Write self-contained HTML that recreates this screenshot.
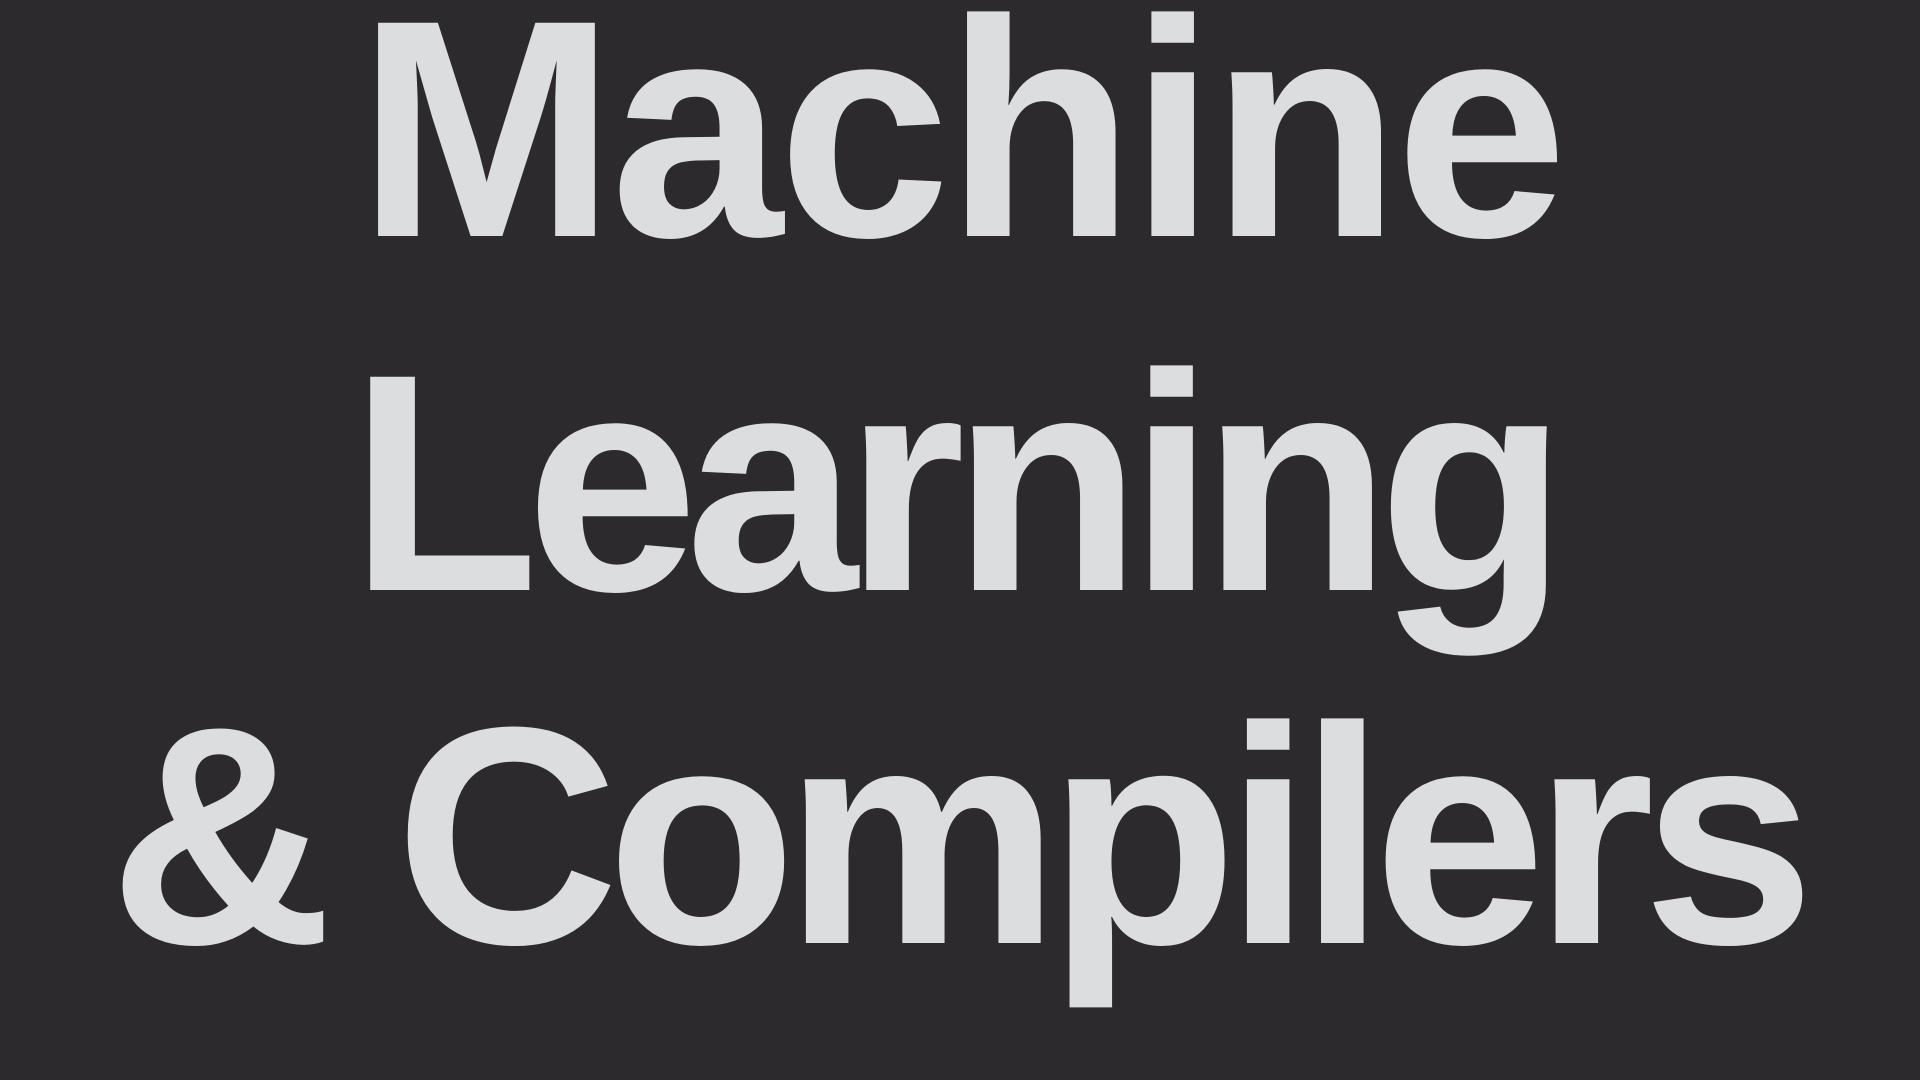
<!DOCTYPE html>
<html><head><meta charset="utf-8"><style>
html,body{margin:0;padding:0;width:1920px;height:1080px;overflow:hidden;background:#2c2a2d;}
.l{position:absolute;left:0;width:1920px;text-align:center;font-family:"Liberation Sans",sans-serif;font-weight:bold;font-size:310px;line-height:310px;color:#dcdddf;white-space:nowrap;letter-spacing:-5px;}
</style></head><body>
<div class="l" style="top:-26px">Machine</div>
<div class="l" style="top:328px;letter-spacing:-13px;left:-8px">Learning</div>
<div class="l" style="top:681px;letter-spacing:-12px;left:-4px">&amp; Compilers</div>
</body></html>
